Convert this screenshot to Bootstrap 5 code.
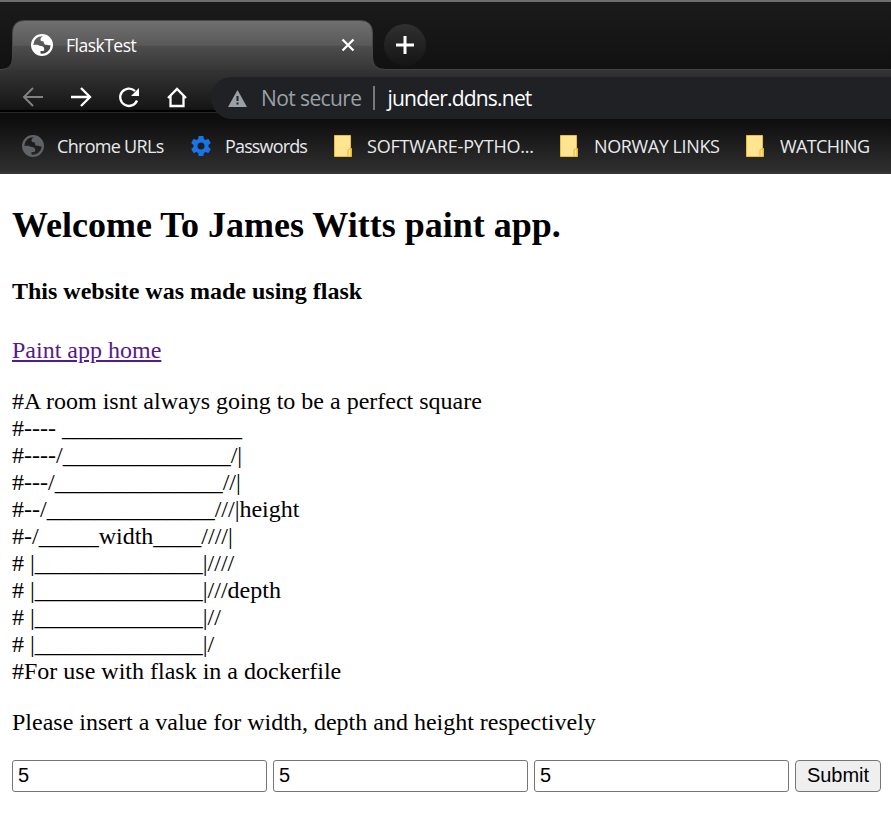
<!DOCTYPE html>
<html lang="en">
<head>
<meta charset="utf-8">
<meta name="viewport" content="width=device-width, initial-scale=1">
<title>FlaskTest</title>
<link href="https://cdn.jsdelivr.net/npm/bootstrap@5.3.0/dist/css/bootstrap.min.css" rel="stylesheet">
<style>
body { background: #fff; color: #000; overflow: hidden; }
svg { display: block; flex: none; }
.browser { height: 174px; font-family: "Open Sans", "Noto Sans", sans-serif; color: #fff; background: #161616; }
.tabstrip { height: 70px; border-top: 2px solid #6f6f70; background: linear-gradient(#1b1b1b, #111); }
.page-tab { width: 386px; height: 50px; padding: 0 31px; }
.tab-shape { position: absolute; left: 0; top: 0; }
.page-tab > :not(.tab-shape) { position: relative; }
.strip-right { height: 50px; border-bottom: 1px solid #434343; }
.tab-title { font-size: 17.5px; letter-spacing: -.5px; margin-left: 13px; line-height: 24px; }
.new-tab { width: 42px; height: 42px; background: linear-gradient(#303030, #141414); margin: 4px 0 0 -2px; }
.toolbar { height: 49px; background: linear-gradient(#343434, #161616 38px, #101010 40px, #000 40px 42px, #262626 42px 43px, #0d0d0d 43px); padding-left: 21px; }
.tools { gap: 24px; height: 54px; }
.omnibox { height: 42px; margin: 7px 0 0 22px; background: #202124; border-radius: 21px 0 0 21px; padding-left: 17px; font-size: 21px; position: relative; }
.omnibox span { padding-top: 2px; }
.insecure { color: #9aa0a6; margin-left: 14px; letter-spacing: -.6px; }
.address { letter-spacing: -.8px; }
.divider { width: 2px; height: 24px; background: #77797c; margin: 0 13px 0 11px; }
.bookmarks { height: 55px; background: linear-gradient(#0d0d0d, #2f2f2f 52px, #3a3a3a); font-size: 18px; color: #e8eaed; padding-left: 22px; }
.mark-item span { white-space: nowrap; margin-top: -1px; }
.mark-item svg { margin-top: -1px; }
.b1 { width: 167px; gap: 13px; letter-spacing: -.7px; }
.b2 { width: 145px; gap: 12px; letter-spacing: -.85px; }
.b3 { width: 226px; gap: 15px; letter-spacing: -.2px; }
.b4 { width: 186px; gap: 16px; letter-spacing: -.4px; }
.b5 { gap: 16px; letter-spacing: -.6px; }
.site { padding: 28px 10px 0 12px; font: 24px/27px "Liberation Serif", serif; }
.site h1 { font-size: 36px; font-weight: 700; line-height: 42px; margin: 2px 0 32px; }
.site h3 { font-size: 24px; font-weight: 700; line-height: 27px; margin: 0 0 32px; }
.site p { margin: 0 0 24px; }
.site a { color: #551a8b; }
.value-row { gap: 6px; }
.value-box { flex: none; width: 255px; height: 32px; border: 1px solid #767676; border-radius: 3px; padding: 0 5px 1px; font: 20px "Liberation Sans", sans-serif; color: #000; }
.send { flex: none; width: 86px; height: 32px; border: 1px solid #767676; border-radius: 4px; background: #efefef; font: 20px/28px "Liberation Sans", sans-serif; color: #000; padding: 0 0 2px; }
</style>
<script src="https://cdn.jsdelivr.net/npm/bootstrap@5.3.0/dist/js/bootstrap.bundle.min.js"></script>
</head>
<body>
<svg width="0" height="0" class="position-absolute">
  <symbol id="globe" viewBox="0 0 22 22"><path fill="currentColor" fill-rule="evenodd" d="M11 0a11 11 0 1 0 0 22 11 11 0 0 0 0-22zM12 2.300C10.500 2.700 9.500 4 9.500 5.500C9.500 7.300 10.500 7.300 12.500 7.300C13 8.500 12.500 9.500 14 10.500C16 11.500 17.500 10.800 19.700 11.500A8.700 8.700 0 0 1 9.500 19.600V17H12.500C13.500 16.500 13.500 14 12.500 13C11 11.500 9 12.300 7.500 11.300C6 10.500 4 10.800 2.300 11A8.700 8.700 0 0 1 12 2.300z"/></symbol>
  <symbol id="folder" viewBox="0 0 18 22"><path fill="#ffe591" stroke="#edbf2c" d="M.5.500h16v13h1v8H.5z"/><path d="M14 21v-5.500q0-1.500 1.500-1.500t1.500 1.500V21" fill="#ffe591" stroke="#dfb52d"/></symbol>
</svg>
<header class="browser">
  <div class="tabstrip d-flex align-items-end">
    <div class="page-tab position-relative d-flex align-items-center">
      <svg class="tab-shape" width="386" height="50">
        <defs><linearGradient id="tabfill" x2="0" y2="1"><stop stop-color="#707070"/><stop offset=".48" stop-color="#595959"/><stop offset=".5" stop-color="#4d4d4d"/><stop offset="1" stop-color="#343434"/></linearGradient></defs>
        <path d="M-1 50V49.500H1Q12.500 49.500 12.500 38V13Q12.500 .500 25 .500H360Q372.500 .500 372.500 13V37Q372.500 49.500 385 49.500H387V52H-1z" fill="url(#tabfill)" stroke="#484848"/>
      </svg>
      <svg width="22" height="22"><use href="#globe"/></svg>
      <span class="tab-title">FlaskTest</span>
      <svg class="ms-auto" width="14" height="14" viewBox="0 0 14 14"><path d="M1.500 1.500l11 11M12.500 1.500l-11 11" stroke="#fff" stroke-width="2.300"/></svg>
    </div>
    <div class="strip-right flex-grow-1">
      <div class="new-tab rounded-circle d-flex align-items-center justify-content-center"><svg width="18" height="18"><path d="M9 0v18M0 9h18" stroke="#fff" stroke-width="3"/></svg></div>
    </div>
  </div>
  <nav class="toolbar d-flex align-items-start">
    <div class="tools d-flex align-items-center">
      <svg width="24" height="24" fill="none" stroke="#808080" stroke-width="2"><path d="M22 12H3M12 3l-9 9 9 9"/></svg>
      <svg width="24" height="24" fill="none" stroke="#fff" stroke-width="2.300"><path d="M2 12h19M12 3l9 9-9 9"/></svg>
      <svg width="24" height="24" fill="none" stroke="#fff" stroke-width="2.300"><path d="M20 15.500A8.700 8.700 0 1 1 18 6"/><path d="M22 3v8h-8z" fill="#fff" stroke="none"/></svg>
      <svg width="24" height="24" fill="none" stroke="#fff" stroke-width="2.300"><path d="M3 13l9-9 9 9M5.500 11V21h13V11"/></svg>
    </div>
    <div class="omnibox flex-grow-1 d-flex align-items-center">
      <svg width="19" height="17" viewBox="0 0 19 17"><path d="M9.500 0L19 17H0z" fill="#9aa0a6"/><path d="M9.500 6v5M9.500 12.500v2" stroke="#202124" stroke-width="2"/></svg>
      <span class="insecure">Not secure</span><i class="divider"></i><span class="address">junder.ddns.net</span>
    </div>
  </nav>
  <div class="bookmarks d-flex align-items-center">
    <div class="mark-item b1 d-flex align-items-center"><svg width="22" height="22" color="#5f6368"><use href="#globe"/></svg><span>Chrome URLs</span></div>
    <div class="mark-item b2 d-flex align-items-center"><svg width="24" height="24" viewBox="0 0 24 24"><path fill="#1a73e8" d="M19.430 12.980c.04-.32.07-.64.07-.98s-.03-.66-.07-.98l2.110-1.650c.19-.15.24-.42.12-.64l-2-3.460c-.12-.22-.39-.3-.61-.22l-2.490 1c-.52-.4-1.080-.73-1.690-.98l-.38-2.650C14.460 2.180 14.250 2 14 2h-4c-.25 0-.46.18-.49.42l-.38 2.650c-.61.25-1.170.59-1.690.98l-2.490-1c-.23-.09-.49 0-.61.22l-2 3.460c-.13.22-.07.49.12.64l2.110 1.650c-.04.32-.07.65-.07.98s.03.66.07.98l-2.110 1.650c-.19.15-.24.42-.12.64l2 3.460c.12.22.39.3.61.22l2.490-1c.52.4 1.080.73 1.690.98l.38 2.650c.03.24.24.42.49.42h4c.25 0 .46-.18.49-.42l.38-2.650c.61-.25 1.170-.59 1.690-.98l2.490 1c.23.09.49 0 .61-.22l2-3.460c.12-.22.07-.49-.12-.64zM12 15.500a3.500 3.500 0 1 1 0-7 3.500 3.500 0 0 1 0 7z"/></svg><span>Passwords</span></div>
    <div class="mark-item b3 d-flex align-items-center"><svg width="18" height="22"><use href="#folder"/></svg><span>SOFTWARE-PYTHO...</span></div>
    <div class="mark-item b4 d-flex align-items-center"><svg width="18" height="22"><use href="#folder"/></svg><span>NORWAY LINKS</span></div>
    <div class="mark-item b5 d-flex align-items-center"><svg width="18" height="22"><use href="#folder"/></svg><span>WATCHING</span></div>
  </div>
</header>
<main class="site">
  <h1>Welcome To James Witts paint app.</h1>
  <h3>This website was made using flask</h3>
  <p><a href="#">Paint app home</a></p>
  <p>#A room isnt always going to be a perfect square<br>
  #---- _______________<br>
  #----/______________/|<br>
  #---/______________//|<br>
  #--/______________///|height<br>
  #-/_____width____////|<br>
  # |______________|////<br>
  # |______________|///depth<br>
  # |______________|//<br>
  # |______________|/<br>
  #For use with flask in a dockerfile</p>
  <p>Please insert a value for width, depth and height respectively</p>
  <form class="value-row d-flex">
    <input class="value-box" value="5" aria-label="Width"><input class="value-box" value="5" aria-label="Depth"><input class="value-box" value="5" aria-label="Height"><button type="button" class="send">Submit</button>
  </form>
</main>
</body>
</html>
